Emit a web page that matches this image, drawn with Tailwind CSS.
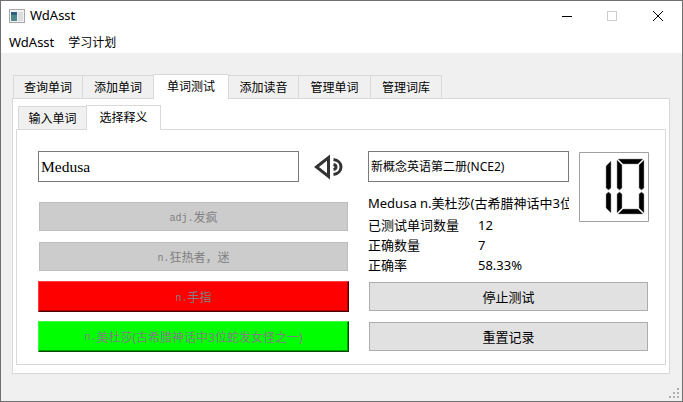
<!DOCTYPE html>
<html lang="zh-CN">
<head>
  <meta charset="UTF-8">
  <title>WdAsst</title>
  <script src="https://cdn.jsdelivr.net/npm/@tailwindcss/browser@4"></script>
</head>
<body class="bg-white">
  <div class="w-[683px] h-[402px] flex flex-col overflow-hidden border border-[#707070] bg-white text-black font-['Noto_Sans','Noto_Sans_CJK_SC',sans-serif]">
    <!-- title bar -->
    <div class="h-[30px] shrink-0 flex items-center pl-[8px] text-[13px]">
      <svg width="16" height="14" viewBox="0 0 16 14" class="mr-[5px]">
        <rect x="0.5" y="0.5" width="15" height="13" fill="#f2f2f2" stroke="#a8a8a8"/>
        <rect x="2" y="3" width="6" height="9" fill="#4f8a8b"/>
        <rect x="2" y="3" width="6" height="3" fill="#2f5f7a"/>
        <rect x="9" y="3" width="5" height="9" fill="#d9dee0"/>
      </svg>
      <span>WdAsst</span>
      <div class="ml-auto flex items-center">
        <svg width="120" height="12" viewBox="0 0 120 12">
          <path d="M0 6.5h10" stroke="#000" fill="none"/>
          <rect x="45.5" y="1.5" width="9" height="9" stroke="#cccccc" fill="none"/>
          <path d="M91 1l10 10M101 1l-10 10" stroke="#000" fill="none"/>
        </svg>
      </div>
    </div>
    <!-- menu bar -->
    <div class="h-[22px] shrink-0 flex items-center pl-[8px] pt-[2px] gap-[14px] text-[13px]">
      <span>WdAsst</span>
      <span class="text-[12px]">学习计划</span>
    </div>

    <!-- central area -->
    <div class="relative flex-1 bg-[#f0f0f0] pt-[21px] pl-[11px] text-[12px]">
      <!-- outer tabs -->
      <div class="flex items-end h-[25px] pl-[1px] relative z-10">
        <div class="w-[70px] h-[23px] mb-[1px] pt-[2px] flex items-center justify-center border border-b-0 border-[#d9d9d9] bg-[#f0f0f0]">查询单词</div>
        <div class="w-[72px] h-[23px] mb-[1px] pt-[2px] -ml-px flex items-center justify-center border border-b-0 border-[#d9d9d9] bg-[#f0f0f0]">添加单词</div>
        <div class="w-[76px] h-[25px] -ml-px flex items-center justify-center border border-b-0 border-[#d9d9d9] bg-white">单词测试</div>
        <div class="w-[71px] h-[23px] mb-[1px] pt-[2px] -ml-px flex items-center justify-center border border-b-0 border-[#d9d9d9] bg-[#f0f0f0]">添加读音</div>
        <div class="w-[73px] h-[23px] mb-[1px] pt-[2px] -ml-px flex items-center justify-center border border-b-0 border-[#d9d9d9] bg-[#f0f0f0]">管理单词</div>
        <div class="w-[72px] h-[23px] mb-[1px] pt-[2px] -ml-px flex items-center justify-center border border-b-0 border-[#d9d9d9] bg-[#f0f0f0]">管理词库</div>
      </div>
      <!-- outer pane -->
      <div class="w-[658px] h-[276px] -mt-px border border-[#d9d9d9] bg-white pt-[6px] pl-[3px]">
        <!-- inner tabs -->
        <div class="flex items-end h-[25px] pl-[2px] relative z-10">
          <div class="w-[69px] h-[23px] mb-[1px] pt-[2px] flex items-center justify-center border border-b-0 border-[#d9d9d9] bg-[#f0f0f0]">输入单词</div>
          <div class="w-[75px] h-[25px] -ml-px flex items-center justify-center border border-b-0 border-[#d9d9d9] bg-white">选择释义</div>
        </div>
        <!-- inner pane -->
        <div class="w-[650px] h-[236px] -mt-px border border-[#d9d9d9] bg-white pt-[21px] pl-[21px] flex gap-[19px]">
          <!-- left column -->
          <div class="w-[311px] flex flex-col">
            <div class="flex items-center h-[31px]">
              <input value="Medusa" class="w-[261px] h-[31px] border border-[#7a7a7a] px-[2px] outline-none text-[15.5px] text-black font-['Liberation_Serif',serif]">
              <svg width="32" height="26" viewBox="0 0 32 26" class="ml-[15px]">
                <path d="M2.5 13L14.5 3.5V22.5Z" fill="none" stroke="#333" stroke-width="3" stroke-linejoin="miter"/>
                <path d="M19.5 5.5C24 6 27 9 27 13S24 20 19.5 20.5" fill="none" stroke="#333" stroke-width="3"/>
                <path d="M19.5 10.5C21 10.8 22 11.8 22 13S21 15.2 19.5 15.5" fill="none" stroke="#333" stroke-width="3"/>
              </svg>
            </div>
            <button class="w-[309px] h-[29px] ml-[1px] mt-[20px] pt-[3px] bg-[#cccccc] border border-[#bdbdbd] text-[#808080] flex items-center justify-center"><span class="text-[10px] font-['Liberation_Mono',monospace]">adj.</span>发疯</button>
            <button class="w-[309px] h-[29px] ml-[1px] mt-[11px] pt-[3px] bg-[#cccccc] border border-[#bdbdbd] text-[#808080] flex items-center justify-center"><span class="text-[10px] font-['Liberation_Mono',monospace]">n.</span>狂热者，迷</button>
            <button class="w-[311px] h-[31px] mt-[10px] pt-[3px] bg-[#ff0000] border border-t-[#ff3c3c] border-l-[#ff3c3c] border-r-[#4d0000] border-b-[#4d0000] shadow-[inset_-1px_-1px_0_#b40000] text-[#808080] flex items-center justify-center"><span class="text-[10px] font-['Liberation_Mono',monospace]">n.</span>手指</button>
            <button class="w-[311px] h-[31px] mt-[9px] pt-[2px] bg-[#00ff00] border border-t-[#3cff3c] border-l-[#3cff3c] border-r-[#004d00] border-b-[#004d00] shadow-[inset_-1px_-1px_0_#00a000] text-[#808080] flex items-center justify-center"><span class="text-[10px] font-['Liberation_Mono',monospace]">n.</span>美杜莎(古希腊神话中3位蛇发女怪之一)</button>
          </div>
          <!-- right column -->
          <div class="w-[281px] flex flex-col">
            <div class="flex gap-[10px]">
              <div class="w-[201px] shrink-0">
                <div class="h-[31px] pt-[1px] border border-[#7a7a7a] flex items-center pl-[2px]">新概念英语第二册(NCE2)</div>
                <div class="h-[22px] mt-[11px] flex items-center overflow-hidden whitespace-nowrap text-[13px]">Medusa n.美杜莎(古希腊神话中3位蛇发女怪之一)</div>
                <div class="text-[13px] mt-[1px]">
                  <div class="h-[20px] flex items-center"><span class="w-[110px]">已测试单词数量</span><span>12</span></div>
                  <div class="h-[20px] flex items-center"><span class="w-[110px]">正确数量</span><span>7</span></div>
                  <div class="h-[20px] flex items-center"><span class="w-[110px]">正确率</span><span>58.33%</span></div>
                </div>
              </div>
              <!-- countdown display -->
              <svg width="70" height="70" viewBox="0 0 70 70" class="mt-[1px] shrink-0">
                <path d="M0.5 69.5V0.5H69.5" fill="none" stroke="#a0a0a0"/>
                <path d="M69.5 0.5V69.5H0.5" fill="none" stroke="#a0a0a0"/>
                <g fill="#000" stroke="#9a9a9a" stroke-width="0.5">
                  <polygon points="32,9 32,36 29.5,38 27,36 27,14"/>
                  <polygon points="27,42 29.5,40 32,42 32,61 27,56"/>
                  <polygon points="38,8 43,13 43,36 40.5,38 38,36"/>
                  <polygon points="39,7 64,7 59,12 44,12"/>
                  <polygon points="65,8 65,36 62.5,38 60,36 60,13"/>
                  <polygon points="38,42 40.5,40 43,42 43,56 38,61"/>
                  <polygon points="60,42 62.5,40 65,42 65,61 60,56"/>
                  <polygon points="44,57 59,57 64,62 39,62"/>
                </g>
              </svg>
            </div>
            <button class="w-[279px] h-[29px] ml-[1px] mt-[6px] pt-[2px] bg-[#e1e1e1] border border-[#adadad] text-[13px] flex items-center justify-center">停止测试</button>
            <button class="w-[279px] h-[29px] ml-[1px] mt-[11px] pt-[2px] bg-[#e1e1e1] border border-[#adadad] text-[13px] flex items-center justify-center">重置记录</button>
          </div>
        </div>
      </div>
      <!-- size grip -->
      <svg width="12" height="12" viewBox="0 0 12 12" class="absolute right-[1px] bottom-[1px]">
        <g fill="#b0b0b0">
          <rect x="8" y="0" width="2" height="2"/>
          <rect x="4" y="4" width="2" height="2"/><rect x="8" y="4" width="2" height="2"/>
          <rect x="0" y="8" width="2" height="2"/><rect x="4" y="8" width="2" height="2"/><rect x="8" y="8" width="2" height="2"/>
        </g>
      </svg>
    </div>
  </div>
</body>
</html>
